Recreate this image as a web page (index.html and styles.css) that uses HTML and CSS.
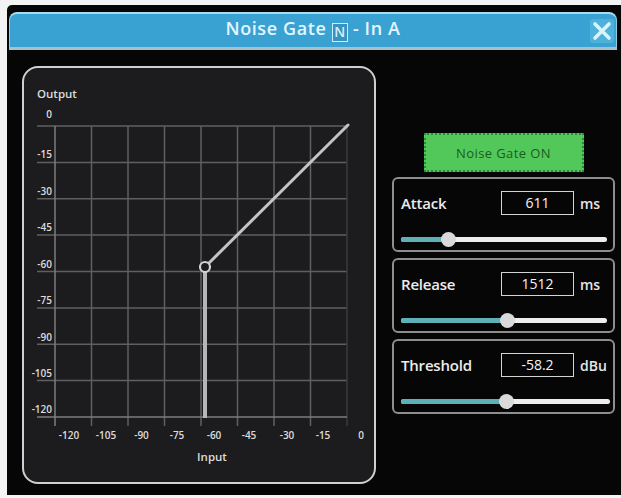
FILE: index.html
```html
<!DOCTYPE html>
<html lang="en">
<head>
<meta charset="utf-8">
<title>Noise Gate - In A</title>
<link rel="stylesheet" href="styles.css">
</head>
<body>
<div class="window">
  <div class="titlebar">
    <div class="title">Noise Gate <span class="badge">N</span> - In A</div>
    <button class="close" aria-label="Close">
      <svg viewBox="0 0 20 20" width="20" height="20">
        <path d="M3 3 L17 17 M17 3 L3 17" stroke="#d6f5fc" stroke-width="3.6" stroke-linecap="round" fill="none"/>
      </svg>
    </button>
  </div>

  <div class="content">
    <div class="graph-panel">
      <svg class="graph" viewBox="24 68 350 414" width="350" height="414">
        <g class="grid">
          <!-- horizontal lines: 0 dB down to -120 dB -->
          <line x1="37" y1="126" x2="347" y2="126"/>
          <line x1="37" y1="162.4" x2="347" y2="162.4"/>
          <line x1="37" y1="198.8" x2="347" y2="198.8"/>
          <line x1="37" y1="235.1" x2="347" y2="235.1"/>
          <line x1="37" y1="271.5" x2="347" y2="271.5"/>
          <line x1="37" y1="307.9" x2="347" y2="307.9"/>
          <line x1="37" y1="344.3" x2="347" y2="344.3"/>
          <line x1="37" y1="380.6" x2="347" y2="380.6"/>
          <!-- vertical lines: -105 dB up to -15 dB -->
          <line x1="91.5" y1="126" x2="91.5" y2="426"/>
          <line x1="128" y1="126" x2="128" y2="426"/>
          <line x1="164.5" y1="126" x2="164.5" y2="426"/>
          <line x1="201" y1="126" x2="201" y2="426"/>
          <line x1="237.5" y1="126" x2="237.5" y2="426"/>
          <line x1="274" y1="126" x2="274" y2="426"/>
          <line x1="310.5" y1="126" x2="310.5" y2="426"/>
          <line class="faint" x1="347" y1="126" x2="347" y2="426"/>
        </g>
        <g class="axes">
          <line x1="55" y1="126" x2="55" y2="426"/>
          <line x1="37" y1="417" x2="347" y2="417"/>
        </g>

        <text class="axis-title" x="37" y="98">Output</text>
        <g class="y-labels">
          <text x="52" y="118">0</text>
          <text x="52" y="158">-15</text>
          <text x="52" y="195">-30</text>
          <text x="52" y="231">-45</text>
          <text x="52" y="268">-60</text>
          <text x="52" y="304">-75</text>
          <text x="52" y="341">-90</text>
          <text x="52" y="377">-105</text>
          <text x="52" y="413">-120</text>
        </g>
        <g class="x-labels">
          <text x="69" y="439">-120</text>
          <text x="106" y="439">-105</text>
          <text x="141.5" y="439">-90</text>
          <text x="177" y="439">-75</text>
          <text x="214" y="439">-60</text>
          <text x="249" y="439">-45</text>
          <text x="287" y="439">-30</text>
          <text x="323" y="439">-15</text>
          <text x="361" y="439">0</text>
        </g>
        <text class="axis-title" x="212" y="461" text-anchor="middle">Input</text>

        <!-- transfer curve: gated below threshold, unity above -->
        <line class="curve gate" x1="205" y1="418" x2="205" y2="272"/>
        <line class="curve" x1="208" y1="264" x2="348" y2="125"/>
        <circle class="knee" cx="205" cy="267" r="5"/>
      </svg>
    </div>

    <div class="controls">
      <button class="toggle">Noise Gate ON</button>

      <div class="param">
        <div class="param-row">
          <span class="param-label">Attack</span>
          <span class="param-value">611</span>
          <span class="param-unit">ms</span>
        </div>
        <div class="slider">
          <div class="slider-track"><div class="slider-fill" style="width: 23.3%"></div></div>
          <div class="slider-thumb" style="left: 23.3%"></div>
        </div>
      </div>

      <div class="param">
        <div class="param-row">
          <span class="param-label">Release</span>
          <span class="param-value">1512</span>
          <span class="param-unit">ms</span>
        </div>
        <div class="slider">
          <div class="slider-track"><div class="slider-fill" style="width: 51.5%"></div></div>
          <div class="slider-thumb" style="left: 51.5%"></div>
        </div>
      </div>

      <div class="param">
        <div class="param-row">
          <span class="param-label">Threshold</span>
          <span class="param-value">-58.2</span>
          <span class="param-unit">dBu</span>
        </div>
        <div class="slider wide">
          <div class="slider-track"><div class="slider-fill" style="width: 50.7%"></div></div>
          <div class="slider-thumb" style="left: 50.7%"></div>
        </div>
      </div>
    </div>
  </div>
</div>
</body>
</html>
```

FILE: styles.css
```css
html, body {
  margin: 0;
  padding: 0;
}

body {
  background: #f3f3f3;
  font-family: "Open Sans", "Noto Sans", sans-serif;
  overflow: hidden;
}

.window {
  margin: 5px 0 0 7px;
  width: 614px;
  height: 490px;
  box-sizing: border-box;
  padding: 7px 4px 0 2px;
  background: #060606;
  border-radius: 5px 0 0 0;
  display: flex;
  flex-direction: column;
  overflow: hidden;
}

/* ---------- title bar ---------- */
.titlebar {
  height: 38px;
  flex: none;
  box-sizing: border-box;
  background: #3aa2d2;
  border-top: 2px solid #a8dcf0;
  border-left: 1px solid #8fcbe6;
  border-right: 1px solid #8fcbe6;
  border-bottom: 3px solid #a7c1cb;
  border-radius: 8px 8px 0 0;
  display: grid;
  grid-template-columns: 1fr auto 1fr;
  align-items: center;
}

.title {
  grid-column: 2;
  color: #e2f6ff;
  font-size: 18px;
  font-weight: 600;
  letter-spacing: 0.6px;
  white-space: nowrap;
  line-height: 1;
}

.badge {
  display: inline-block;
  box-sizing: border-box;
  width: 16px;
  height: 19px;
  line-height: 16px;
  font-size: 14px;
  letter-spacing: 0;
  text-align: center;
  border: 1.5px solid #c4f0fb;
  background: #3893c0;
  color: #d2f0f9;
  vertical-align: -2px;
}

.close {
  grid-column: 3;
  justify-self: end;
  margin-right: 2px;
  width: 24px;
  height: 24px;
  padding: 0;
  border: none;
  border-radius: 3px;
  background: #4fb0da;
  display: flex;
  align-items: center;
  justify-content: center;
}

/* ---------- body ---------- */
.content {
  flex: 1;
  display: flex;
  gap: 16px;
  padding: 16px 0 0 13px;
}

.graph-panel {
  width: 354px;
  height: 418px;
  flex: none;
  box-sizing: border-box;
  border: 2px solid #cfcfcf;
  border-radius: 16px;
  background: #1c1c1f;
  overflow: hidden;
}

.graph {
  display: block;
}

.grid line {
  stroke: #5f5f5f;
  stroke-width: 1.5;
}

.grid line.faint {
  stroke: #3a3a3a;
}

.axes line {
  stroke: #7c7c7c;
  stroke-width: 1.5;
}

.graph text {
  fill: #dcdcdc;
  font-family: "Open Sans", "Noto Sans", sans-serif;
}

.axis-title {
  font-size: 11.5px;
  font-weight: 600;
}

.y-labels text {
  font-size: 10px;
  font-weight: 600;
  text-anchor: end;
}

.x-labels text {
  font-size: 10px;
  font-weight: 600;
  text-anchor: middle;
}

.curve {
  stroke: #c3c3c3;
  stroke-width: 3;
  stroke-linecap: round;
}

.curve.gate {
  stroke: #b6b6b6;
  stroke-width: 4;
  stroke-linecap: butt;
}

.knee {
  fill: #1c1c1f;
  stroke: #d2d2d2;
  stroke-width: 2.2;
}

/* ---------- controls ---------- */
.controls {
  width: 223px;
  flex: none;
  display: flex;
  flex-direction: column;
  gap: 6px;
  padding-top: 67px;
}

.toggle {
  align-self: center;
  width: 160px;
  height: 39px;
  margin-bottom: -1px;
  box-sizing: border-box;
  border: 2px dotted #2d8a37;
  background: #52c85b;
  color: #1d5b23;
  font-family: "Open Sans", "Noto Sans", sans-serif;
  font-size: 13px;
  letter-spacing: 0.4px;
  padding: 0;
}

.param {
  height: 75px;
  box-sizing: border-box;
  border: 2px solid #8e8e8e;
  border-radius: 6px;
  padding: 11px 0 0 7px;
}

.param-row {
  display: flex;
  align-items: center;
  height: 26px;
}

.param-label {
  flex: 1;
  color: #ececec;
  font-size: 15px;
  font-weight: 600;
  letter-spacing: -0.2px;
}

.param-value {
  width: 73px;
  height: 24px;
  box-sizing: border-box;
  border: 1.5px solid #d4d4d4;
  color: #f4f4f4;
  font-size: 14px;
  line-height: 21px;
  text-align: center;
}

.param-unit {
  width: 33px;
  margin-left: 6px;
  color: #e6e6e6;
  font-size: 14px;
  font-weight: 600;
  white-space: nowrap;
}

.slider {
  position: relative;
  height: 15px;
  margin: 16px 6px 0 0;
  display: flex;
  align-items: center;
}

.slider.wide {
  margin-right: 3px;
}

.slider-track {
  flex: 1;
  height: 5px;
  border-radius: 3px;
  background: #ededed;
  overflow: hidden;
}

.slider-fill {
  height: 100%;
  background: #5cb0b6;
}

.slider-thumb {
  position: absolute;
  top: 0;
  width: 15px;
  height: 15px;
  margin-left: -7.5px;
  border-radius: 50%;
  background: #dadada;
}
```
